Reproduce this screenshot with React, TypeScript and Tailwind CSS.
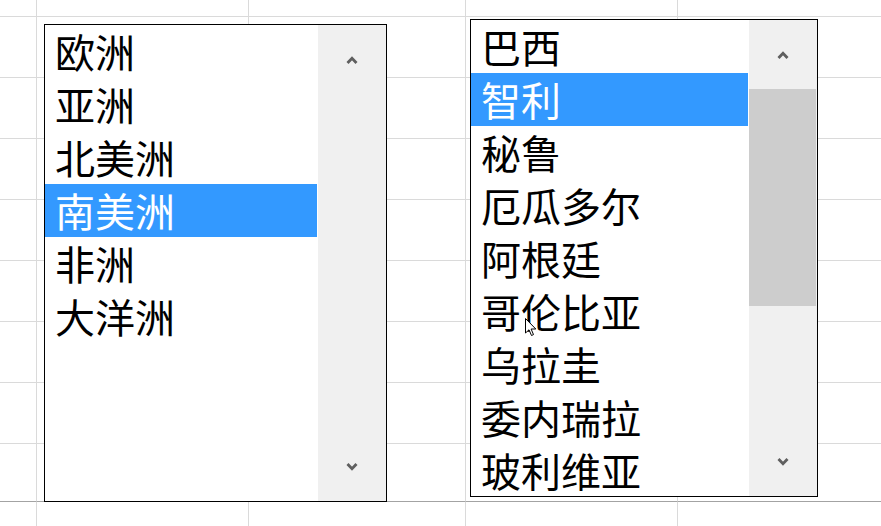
import React from "react";

const CONTINENTS = ["欧洲", "亚洲", "北美洲", "南美洲", "非洲", "大洋洲"];

const COUNTRIES = [
  "巴西",
  "智利",
  "秘鲁",
  "厄瓜多尔",
  "阿根廷",
  "哥伦比亚",
  "乌拉圭",
  "委内瑞拉",
  "玻利维亚",
  "巴拉圭",
  "圭亚那",
  "苏里南",
  "法属圭亚那",
  "福克兰群岛",
];

const ROWS = 10;
const COLS = 5;

function Chevron({ down }: { down?: boolean }) {
  return (
    <svg width="12" height="8" viewBox="0 0 12 8" className={down ? "rotate-180" : ""}>
      <polyline points="1.5,7 6,2.2 10.5,7" fill="none" stroke="#5f5f5f" strokeWidth="2.8" />
    </svg>
  );
}

function ListBox({
  items,
  selected,
  thumb,
  className,
}: {
  items: string[];
  selected: number;
  thumb?: boolean;
  className: string;
}) {
  return (
    <div className={`absolute flex border border-black bg-white ${className}`}>
      <ul className="flex-1 overflow-hidden">
        {items.map((item, i) => (
          <li
            key={item}
            className={`h-[53px] mr-[1px] pl-[10px] text-[40px] leading-[53px] whitespace-nowrap ${
              i === selected ? "bg-[#3399ff] text-white" : "text-black"
            }`}
          >
            {item}
          </li>
        ))}
      </ul>
      <div className="w-[68px] flex flex-col bg-[#f0f0f0]">
        <div className="h-[69px] flex items-center justify-center">
          <Chevron />
        </div>
        <div className="flex-1 flex flex-col">
          {thumb && <div className="h-[217px] mr-[1px] bg-[#cdcdcd]" />}
        </div>
        <div className="h-[69px] flex items-center justify-center">
          <Chevron down />
        </div>
      </div>
    </div>
  );
}

export default function App() {
  const cells = [];
  for (let r = 0; r < ROWS; r++) {
    for (let c = 0; c < COLS; c++) {
      const right = c < COLS - 1 ? "border-r" : "";
      const bottom = r < ROWS - 1 ? (r === ROWS - 2 ? "border-b border-b-[#a3a3a3]" : "border-b") : "";
      cells.push(<div key={`${r}-${c}`} className={`border-[#dadada] ${right} ${bottom}`} />);
    }
  }

  return (
    <div className="relative w-[881px] h-[526px] overflow-hidden bg-white font-['Noto_Sans_CJK_SC','Microsoft_YaHei',sans-serif]">
      <div className="grid w-full h-full grid-cols-[37px_212px_217px_212px_1fr] grid-rows-[17px_61px_61px_61px_61px_61px_61px_61px_58px_1fr]">
        {cells}
      </div>

      <ListBox items={CONTINENTS} selected={3} className="left-[44px] top-[24px] w-[343px] h-[478px]" />
      <ListBox items={COUNTRIES} selected={1} thumb className="left-[470px] top-[19px] w-[348px] h-[478px]" />

      <svg width="12" height="19" viewBox="0 0 12 19" className="absolute left-[525px] top-[318px]">
        <path d="M0.5 0.5 L0.5 15 L4 11.8 L6.5 17.5 L8.5 16.6 L6.1 11 L10.8 11 Z" fill="#fff" stroke="#000" strokeWidth="1" />
      </svg>
    </div>
  );
}
